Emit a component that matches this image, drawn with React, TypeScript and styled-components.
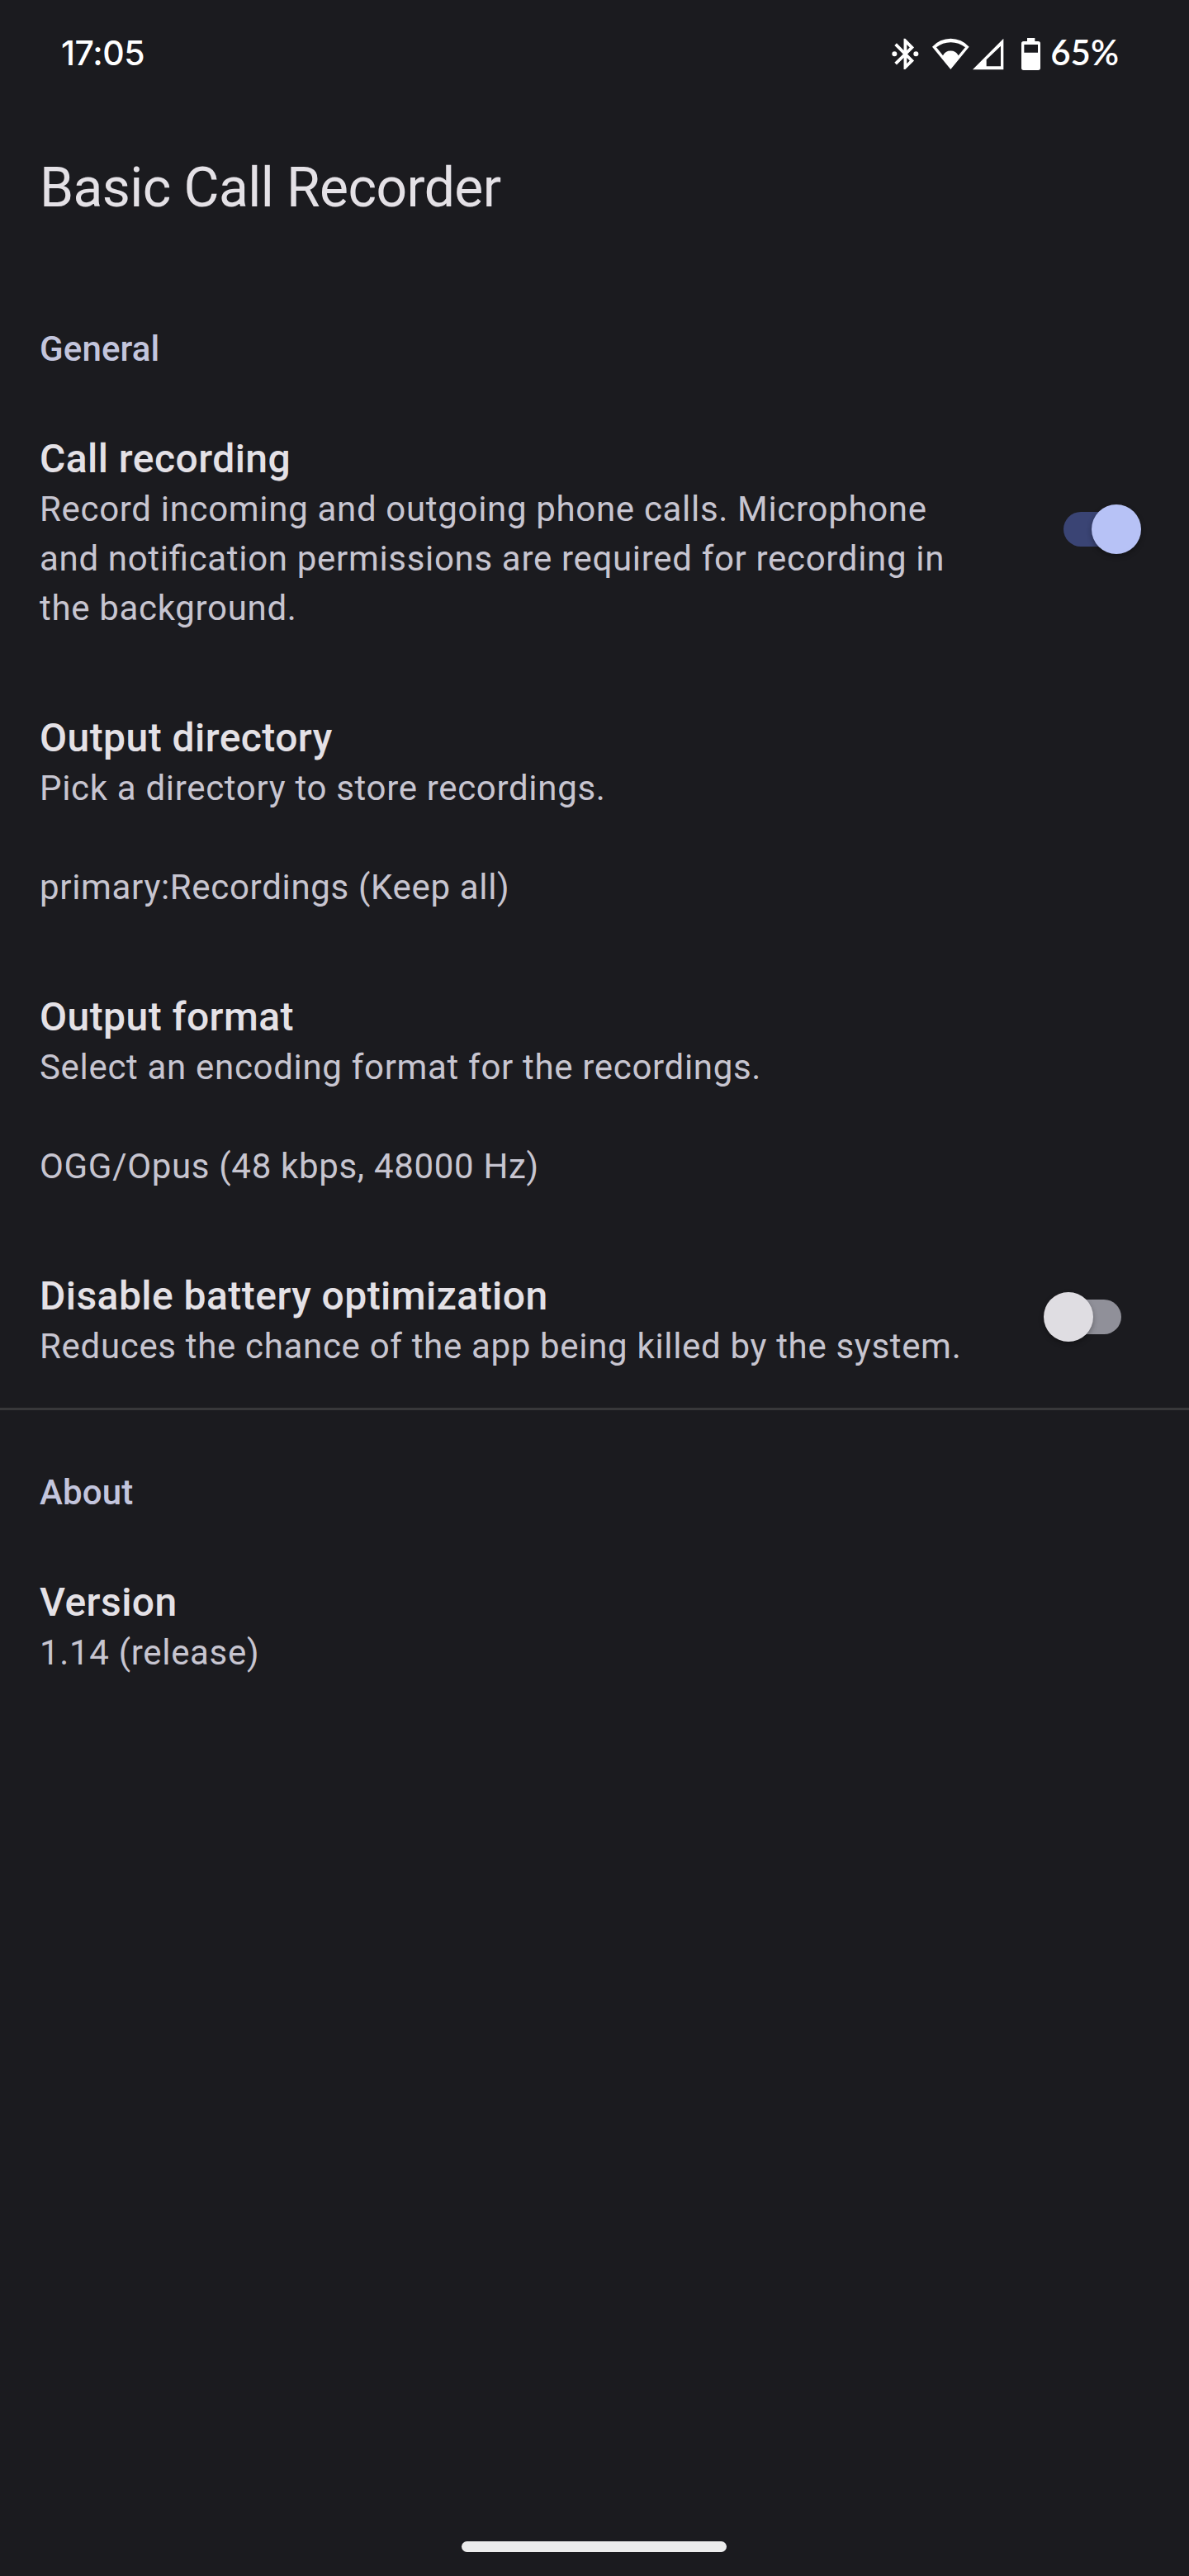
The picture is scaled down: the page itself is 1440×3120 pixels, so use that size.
import React, { useState } from "react";
import styled, { createGlobalStyle } from "styled-components";

const Global = createGlobalStyle`
  body { margin: 0; background: #1b1b1f; }
  * { box-sizing: border-box; }
`;

const Screen = styled.main`
  width: 1440px;
  height: 3120px;
  display: flex;
  flex-direction: column;
  background: #1b1b1f;
  color: #e4e1e6;
  font-family: Roboto, "Liberation Sans", sans-serif;
`;

const StatusBar = styled.header`
  height: 130px;
  display: flex;
  align-items: center;
  justify-content: space-between;
  padding: 0 85px 0 74px;
  color: #fff;
`;

const Clock = styled.time`
  padding-bottom: 2px;
  font-family: Inter, sans-serif;
  font-size: 41px;
  font-weight: 500;
  line-height: 50px;
  letter-spacing: -0.4px;
`;

const StatusIcons = styled.div`
  display: flex;
  align-items: center;
`;

const StatusIcon = styled.svg<{ $width: number; $gap: number }>`
  display: block;
  width: ${(p) => p.$width}px;
  height: 40px;
  margin-right: ${(p) => p.$gap}px;
  fill: #fff;
`;

const BatteryLevel = styled.span`
  padding-bottom: 4px;
  font-family: Lato, sans-serif;
  font-size: 42px;
  font-weight: 600;
  line-height: 50px;
`;

const AppTitle = styled.h1`
  margin: 0;
  height: 196px;
  padding: 0 48px;
  line-height: 196px;
  font-size: 66px;
  font-weight: 400;
  letter-spacing: -0.58px;
`;

const SectionTitle = styled.h2`
  margin: 0;
  padding: 67px 48px 24px;
  line-height: 60px;
  font-size: 42px;
  font-weight: 500;
  letter-spacing: 0.15px;
  color: #c3c5dd;
`;

const Preference = styled.section`
  display: flex;
  align-items: center;
  justify-content: space-between;
  padding: 48px 58px 48px 48px;
`;

const PrefTitle = styled.h3`
  margin: 0;
  line-height: 62px;
  font-size: 48px;
  font-weight: 500;
  letter-spacing: 0.45px;
`;

const Summary = styled.p`
  margin: 0;
  line-height: 60px;
  font-size: 42px;
  letter-spacing: 0.68px;
  font-feature-settings: "liga" 1;
  color: #c7c5d0;
  white-space: pre-line;
`;

const SwitchButton = styled.button`
  display: flex;
  align-items: center;
  width: 118px;
  height: 60px;
  margin-bottom: 10px;
  padding: 0 24px;
  border: 0;
  background: none;
`;

const Track = styled.span<{ $on: boolean }>`
  display: flex;
  align-items: center;
  justify-content: ${(p) => (p.$on ? "flex-end" : "flex-start")};
  width: 70px;
  height: 42px;
  border-radius: 21px;
  background: ${(p) => (p.$on ? "#3a4474" : "#909099")};
`;

const Thumb = styled.span<{ $on: boolean }>`
  flex: none;
  width: 60px;
  height: 60px;
  margin: 0 -24px;
  border-radius: 50%;
  background: ${(p) => (p.$on ? "#b7c2f6" : "#dfdde2")};
  box-shadow: 0 3px 6px rgba(0, 0, 0, 0.3);
`;

const Divider = styled.hr`
  width: 100%;
  height: 3px;
  margin: -4px 0 3px;
  border: 0;
  background: #38383a;
`;

const NavHandle = styled.div`
  width: 321px;
  height: 13px;
  margin: auto 0 29px 559px;
  border-radius: 7px;
  background: #ececec;
`;

function Toggle({ label, initial }: { label: string; initial: boolean }) {
  const [on, setOn] = useState(initial);
  return (
    <SwitchButton role="switch" aria-label={label} aria-checked={on} onClick={() => setOn(!on)}>
      <Track $on={on}>
        <Thumb $on={on} />
      </Track>
    </SwitchButton>
  );
}

function Item({ title, summary, toggle }: { title: string; summary: string; toggle?: boolean }) {
  return (
    <Preference>
      <div>
        <PrefTitle>{title}</PrefTitle>
        <Summary>{summary}</Summary>
      </div>
      {toggle !== undefined && <Toggle label={title} initial={toggle} />}
    </Preference>
  );
}

export default function App() {
  return (
    <Screen>
      <Global />
      <StatusBar>
        <Clock>17:05</Clock>
        <StatusIcons>
          <StatusIcon $width={33} $gap={15} viewBox="63 45 99 120">
            <path
              transform="translate(45 39) scale(5.6)"
              d="M17.71 7.71 12 2h-1v7.59L6.41 5 5 6.41 10.59 12 5 17.59 6.41 19 11 14.41V22h1l5.71-5.71-4.3-4.29zM13 5.83l1.88 1.88L13 9.59zm1.88 10.46L13 18.17v-3.76z"
            />
            <circle cx="73" cy="106" r="9" />
            <circle cx="151" cy="106" r="9" />
          </StatusIcon>
          <StatusIcon $width={47} $gap={2} viewBox="207 45 141 120">
            <path
              fillRule="evenodd"
              d="M210 80A90 90 0 0 1 344 80L277 162ZM225 82L249 112A31 31 0 0 1 305 112L330 82A84 84 0 0 0 225 82Z"
            />
          </StatusIcon>
          <StatusIcon $width={40} $gap={19} viewBox="354 45 120 120">
            <path fillRule="evenodd" d="M357 163L469 50V163ZM407 127V151H459V77Z" />
          </StatusIcon>
          <StatusIcon $width={25} $gap={11} viewBox="531 45 75 120">
            <path
              fillRule="evenodd"
              d="M555 48H583V60H595A8 8 0 0 1 603 68V157A8 8 0 0 1 595 165H542A8 8 0 0 1 534 157V68A8 8 0 0 1 542 60H555ZM544 72V101H594V72Z"
            />
          </StatusIcon>
          <BatteryLevel>65%</BatteryLevel>
        </StatusIcons>
      </StatusBar>
      <AppTitle>Basic Call Recorder</AppTitle>
      <SectionTitle>General</SectionTitle>
      <Item
        title="Call recording"
        summary={"Record incoming and outgoing phone calls. Microphone\nand notification permissions are required for recording in\nthe background."}
        toggle={true}
      />
      <Item
        title="Output directory"
        summary={"Pick a directory to store recordings.\n\nprimary:Recordings (Keep all)"}
      />
      <Item
        title="Output format"
        summary={"Select an encoding format for the recordings.\n\nOGG/Opus (48 kbps, 48000 Hz)"}
      />
      <Item
        title="Disable battery optimization"
        summary="Reduces the chance of the app being killed by the system."
        toggle={false}
      />
      <Divider />
      <SectionTitle>About</SectionTitle>
      <Item title="Version" summary="1.14 (release)" />
      <NavHandle />
    </Screen>
  );
}
